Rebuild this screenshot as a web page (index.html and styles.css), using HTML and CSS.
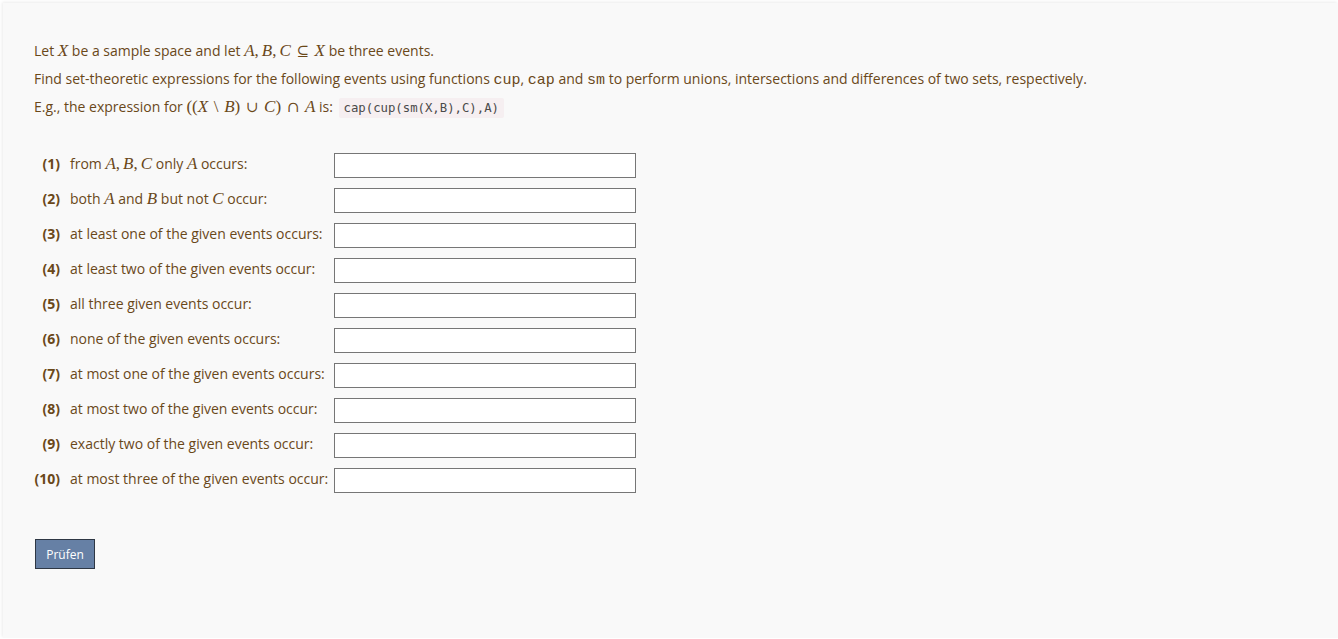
FILE: index.html
```html
<!DOCTYPE html>
<html>
<head>
<meta charset="utf-8">
<link rel="stylesheet" href="styles.css">
</head>
<body>
<div class="panel">
  <p class="line">Let <span class="m">X</span> be a sample space and let <span class="m">A</span><span class="mr cm">,</span><span class="m">B</span><span class="mr cm">,</span><span class="m">C</span> <span class="mr op">⊆</span> <span class="m">X</span> be three events.</p>
  <p class="line">Find set-theoretic expressions for the following events using functions <span class="tt">cup</span>, <span class="tt">cap</span> and <span class="tt">sm</span> to perform unions, intersections and differences of two sets, respectively.</p>
  <p class="line">E.g., the expression for <span class="mr">((</span><span class="m">X</span> <span class="mr bin">\</span> <span class="m">B</span><span class="mr">)</span> <span class="mr op">∪</span> <span class="m">C</span><span class="mr">)</span> <span class="mr op">∩</span> <span class="m">A</span> is: <code class="code">cap(cup(sm(X,B),C),A)</code></p>

  <div class="qgrid">
    <span class="num">(1)</span><span class="lbl">from <span class="m">A</span><span class="mr cm">,</span><span class="m">B</span><span class="mr cm">,</span><span class="m">C</span> only <span class="m">A</span> occurs:</span><input class="ans" type="text">
    <span class="num">(2)</span><span class="lbl">both <span class="m">A</span> and <span class="m">B</span> but not <span class="m">C</span> occur:</span><input class="ans" type="text">
    <span class="num">(3)</span><span class="lbl">at least one of the given events occurs:</span><input class="ans" type="text">
    <span class="num">(4)</span><span class="lbl">at least two of the given events occur:</span><input class="ans" type="text">
    <span class="num">(5)</span><span class="lbl">all three given events occur:</span><input class="ans" type="text">
    <span class="num">(6)</span><span class="lbl">none of the given events occurs:</span><input class="ans" type="text">
    <span class="num">(7)</span><span class="lbl">at most one of the given events occurs:</span><input class="ans" type="text">
    <span class="num">(8)</span><span class="lbl">at most two of the given events occur:</span><input class="ans" type="text">
    <span class="num">(9)</span><span class="lbl">exactly two of the given events occur:</span><input class="ans" type="text">
    <span class="num">(10)</span><span class="lbl">at most three of the given events occur:</span><input class="ans" type="text">
  </div>

  <button class="btn" type="button">Prüfen</button>
</div>
</body>
</html>
```

FILE: styles.css
```css
html, body {
  margin: 0;
  padding: 0;
  background: #ffffff;
}
body {
  font-family: "Open Sans", "Noto Sans", sans-serif;
  font-size: 14px;
  color: #6a4819;
}
.panel {
  margin: 3px 0 0 3px;
  background: #f9f9f9;
  box-shadow: -1px -1px 3px rgba(0,0,0,0.08);
  padding: 34px 31px 69px 31px;
  min-height: 530px;
}
.line {
  margin: 0;
  height: 28px;
  line-height: 28px;
}
.m {
  font-family: "Liberation Serif", "Times New Roman", serif;
  font-style: italic;
  font-size: 17px;
  line-height: 1;
}
.mr {
  font-family: "Liberation Serif", "DejaVu Serif", serif;
  font-size: 17px;
  line-height: 1;
}
.mr.cm {
  margin-right: 3px;
}
.mr.op {
  font-family: "DejaVu Serif", serif;
  font-size: 15px;
  margin: 0 2px;
}
.mr.bin {
  margin: 0 2px;
}
.tt {
  font-family: "Liberation Mono", "Courier New", monospace;
  font-size: 15px;
  line-height: 1;
}
.code {
  font-family: "DejaVu Sans Mono", monospace;
  font-size: 12.3px;
  line-height: 1;
  color: #4a4a4a;
  background: #f6eff1;
  padding: 3px 5px;
  margin-left: 2px;
  border-radius: 2px;
}
.qgrid {
  display: grid;
  grid-template-columns: 26px 258px 302px;
  column-gap: 10px;
  row-gap: 10px;
  margin-top: 32px;
  align-items: center;
}
.qgrid .ans {
  margin-left: -4px;
}
.num {
  font-weight: 700;
  text-align: right;
  white-space: nowrap;
  position: relative;
  top: -2px;
}
.lbl {
  white-space: nowrap;
  position: relative;
  top: -2px;
}
.ans {
  width: 302px;
  height: 25px;
  box-sizing: border-box;
  border: 1px solid #767676;
  background: #ffffff;
  margin: 0;
  padding: 2px 4px;
  font-family: "Open Sans", sans-serif;
  font-size: 14px;
}
.btn {
  display: block;
  margin-top: 46px;
  margin-left: 1px;
  width: 60px;
  height: 30px;
  background: #6680a5;
  border: 1px solid #2e3744;
  color: #ffffff;
  font-family: "Open Sans", sans-serif;
  font-size: 12px;
  padding: 0;
}
```
